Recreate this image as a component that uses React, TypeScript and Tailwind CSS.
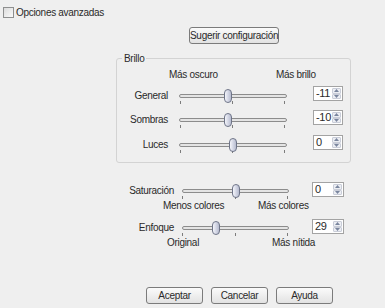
import React from 'react';

type SliderProps = { width: number; value: number; min: number; max: number; ticks: number[] };

function Slider({ width, value, min, max, ticks }: SliderProps) {
  const left = 4 + ((value - min) / (max - min)) * (width - 16);
  return (
    <div className="relative h-[18px] shrink-0" style={{ width }}>
      <div className="absolute left-0 right-0 top-[8px] h-[4px] rounded-full border border-[#8c8c8c] bg-[#e4e4e4]" />
      {ticks.map((t, i) => (
        <div key={i} className="absolute top-[15px] h-[3px] w-px bg-[#7c7c7c]" style={{ left: t }} />
      ))}
      <div
        className="absolute top-[3px] h-[14px] w-[8px] rounded-[4px] border border-[#6e7488] bg-gradient-to-r from-[#f4f5fa] via-[#d5d8e6] to-[#b7bccf]"
        style={{ left }}
      />
    </div>
  );
}

function Spin({ value, w = 30 }: { value: string; w?: number }) {
  return (
    <div className="flex h-[15px] shrink-0 items-stretch border border-[#a3a3a3] bg-white" style={{ width: w }}>
      <span className="flex-1 pl-[2px] text-[11px] leading-[13px]">{value}</span>
      <div className="my-[1px] mr-[1px] flex w-[9px] flex-col">
        <div className="flex flex-1 items-center justify-center rounded-[1px] border border-[#c9cdd8] bg-[#eceef3]">
          <svg width="5" height="3" viewBox="0 0 5 3"><path d="M2.5 0L5 3H0z" fill="#7a869e" /></svg>
        </div>
        <div className="flex flex-1 items-center justify-center rounded-[1px] border border-[#c9cdd8] bg-[#eceef3]">
          <svg width="5" height="3" viewBox="0 0 5 3"><path d="M0 0h5L2.5 3z" fill="#7a869e" /></svg>
        </div>
      </div>
    </div>
  );
}

function Btn({ children, w }: { children: React.ReactNode; w: number }) {
  return (
    <button
      className="h-[17px] shrink-0 whitespace-nowrap rounded-[3px] border border-[#7b7b7b] bg-gradient-to-b from-[#fbfbfb] to-[#e2e2e2] text-[10px] leading-[15px] tracking-[-0.3px] text-[#2a2a2a]"
      style={{ width: w }}
    >
      {children}
    </button>
  );
}

const brillo = [
  { label: 'General', value: -11 },
  { label: 'Sombras', value: -10 },
  { label: 'Luces', value: 0 },
];

export default function App() {
  return (
    <div className="flex h-[308px] w-[385px] flex-col overflow-hidden bg-[#efefef] font-['Liberation_Sans',Arial,sans-serif] text-[10px] tracking-[-0.3px] text-[#2a2a2a]">
      {/* checkbox */}
      <div className="flex h-[24px] items-center pl-[3px]">
        <div className="h-[11px] w-[11px] border border-[#8e8f8f] bg-gradient-to-br from-[#dcdcdc] to-[#fafafa]" />
        <span className="ml-[2px]">Opciones avanzadas</span>
      </div>

      <div className="mt-[3px] pl-[189px]">
        <Btn w={90}>Sugerir configuración</Btn>
      </div>

      {/* Brillo group */}
      <div className="relative ml-[116px] mt-[14px] h-[105px] w-[235px] rounded-[3px] border border-[#d3d3d3]">
        <span className="absolute left-[5px] top-[-7px] bg-[#efefef] px-[2px] leading-[13px]">Brillo</span>
        <div className="mt-[8px] flex h-[14px] items-center pl-[52px]">
          <span className="w-[107px]">Más oscuro</span>
          <span>Más brillo</span>
        </div>
        {brillo.map((r, i) => (
          <div key={r.label} className={`flex h-[24px] items-center ${i === 0 ? 'mt-[2px]' : i === 2 ? 'mt-[1px]' : ''}`}>
            <span className="w-[51px] text-right">{r.label}</span>
            <div className="ml-[11px]">
              <Slider width={108} value={r.value} min={-100} max={100} ticks={[1, 53, 105]} />
            </div>
            <div className="ml-[26px] -mt-[3px]">
              <Spin value={String(r.value)} w={30} />
            </div>
          </div>
        ))}
      </div>

      {/* Saturación */}
      <div className="mt-[17px] flex h-[20px] items-center">
        <span className="w-[174px] text-right">Saturación</span>
        <div className="ml-[8px]">
          <Slider width={107} value={0} min={-100} max={100} ticks={[0, 53, 105]} />
        </div>
        <div className="ml-[23px] -mt-[1px]">
          <Spin value="0" w={32} />
        </div>
      </div>
      <div className="flex h-[10px] items-center pl-[163px]">
        <span className="w-[95px]">Menos colores</span>
        <span>Más colores</span>
      </div>

      {/* Enfoque */}
      <div className="mt-[7px] flex h-[20px] items-center">
        <span className="w-[174px] text-right">Enfoque</span>
        <div className="ml-[8px]">
          <Slider width={107} value={29} min={0} max={100} ticks={[0, 53, 105]} />
        </div>
        <div className="ml-[23px] -mt-[1px]">
          <Spin value="29" w={32} />
        </div>
      </div>
      <div className="flex h-[10px] items-center pl-[167px]">
        <span className="w-[105px]">Original</span>
        <span>Más nítida</span>
      </div>

      {/* buttons */}
      <div className="mt-[40px] flex gap-[8px] pl-[146px]">
        <Btn w={57}>Aceptar</Btn>
        <Btn w={57}>Cancelar</Btn>
        <Btn w={57}>Ayuda</Btn>
      </div>
    </div>
  );
}
